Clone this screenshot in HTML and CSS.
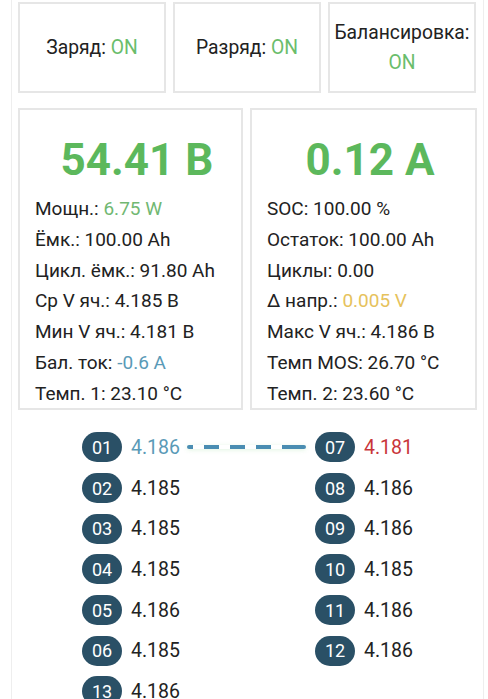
FILE: index.html
```html
<!DOCTYPE html>
<html lang="ru">
<head>
<meta charset="utf-8">
<link rel="stylesheet" href="styles.css">
</head>
<body>
<div class="page">
  <div class="status-row">
    <div class="box status"><div>Заряд: <span class="on">ON</span></div></div>
    <div class="box status"><div>Разряд: <span class="on">ON</span></div></div>
    <div class="box status"><div>Балансировка:<br><span class="on">ON</span></div></div>
  </div>
  <div class="main-row">
    <div class="box panel">
      <div class="big">54.41 B</div>
      <div class="rows">
        <div>Мощн.: <span class="green">6.75 W</span></div>
        <div>Ёмк.: 100.00 Ah</div>
        <div>Цикл. ёмк.: 91.80 Ah</div>
        <div>Ср V яч.: 4.185 B</div>
        <div>Мин V яч.: 4.181 B</div>
        <div>Бал. ток: <span class="blue">-0.6 A</span></div>
        <div>Темп. 1: 23.10 °C</div>
      </div>
    </div>
    <div class="box panel">
      <div class="big">0.12 A</div>
      <div class="rows">
        <div>SOC: 100.00 %</div>
        <div>Остаток: 100.00 Ah</div>
        <div>Циклы: 0.00</div>
        <div>Δ напр.: <span class="yellow">0.005 V</span></div>
        <div>Макс V яч.: 4.186 B</div>
        <div>Темп MOS: 26.70 °C</div>
        <div>Темп. 2: 23.60 °C</div>
      </div>
    </div>
  </div>
  <div class="cells">
    <div class="cell"><span class="badge">01</span><span class="val min">4.186</span><span class="dash"></span></div>
    <div class="cell"><span class="badge">07</span><span class="val max">4.181</span></div>
    <div class="cell"><span class="badge">02</span><span class="val">4.185</span></div>
    <div class="cell"><span class="badge">08</span><span class="val">4.186</span></div>
    <div class="cell"><span class="badge">03</span><span class="val">4.185</span></div>
    <div class="cell"><span class="badge">09</span><span class="val">4.186</span></div>
    <div class="cell"><span class="badge">04</span><span class="val">4.185</span></div>
    <div class="cell"><span class="badge">10</span><span class="val">4.185</span></div>
    <div class="cell"><span class="badge">05</span><span class="val">4.186</span></div>
    <div class="cell"><span class="badge">11</span><span class="val">4.186</span></div>
    <div class="cell"><span class="badge">06</span><span class="val">4.185</span></div>
    <div class="cell"><span class="badge">12</span><span class="val">4.186</span></div>
    <div class="cell"><span class="badge">13</span><span class="val">4.186</span></div>
  </div>
</div>
</body>
</html>
```
FILE: styles.css
```css
html, body {
  margin: 0;
  padding: 0;
  background: #fff;
  overflow: hidden;
}
body {
  font-family: Roboto, "Noto Sans", sans-serif;
  color: #222;
}
.page {
  margin: 0 4px 0 11px;
  min-height: 720px;
  border-left: 1px solid #eeeeee;
  border-right: 1px solid #eeeeee;
  padding: 2px 7px 0 6px;
}
.box {
  border: 2px solid #e6e6e6;
  background: #fff;
  box-sizing: border-box;
}
.status-row {
  display: grid;
  grid-template-columns: 148px 148px 148px;
  column-gap: 7px;
}
.status {
  height: 91px;
  display: flex;
  align-items: center;
  justify-content: center;
  text-align: center;
  font-size: 19.3px;
  line-height: 30px;
}
.on { color: #6abd6b; }
.main-row {
  margin-top: 15px;
  display: grid;
  grid-template-columns: 225px 227px;
  column-gap: 7px;
}
.panel {
  height: 302px;
  padding: 22px 0 0 15px;
}
.big {
  font-size: 44px;
  font-weight: 700;
  color: #5cb85c;
  text-align: center;
  padding-right: 2px;
  line-height: 56px;
}
.rows {
  margin-top: 6px;
  font-size: 19px;
  line-height: 30.8px;
  white-space: nowrap;
}
.green { color: #71b872; }
.blue { color: #5a9ab7; }
.yellow { color: #e6c25c; }
.cells {
  margin-top: 17px;
  display: grid;
  grid-template-columns: 233px 150px;
  grid-auto-rows: 40.7px;
  padding-left: 64px;
}
.cell {
  display: flex;
  align-items: center;
  position: relative;
}
.badge {
  width: 40px;
  height: 30px;
  border-radius: 15px;
  background: #2a5066;
  color: #fff;
  font-size: 18px;
  display: flex;
  align-items: center;
  justify-content: center;
}
.val {
  margin-left: 9px;
  font-size: 19.5px;
}
.val.min { color: #5a9ab7; }
.val.max { color: #c9353a; }
.dash {
  position: absolute;
  left: 105px;
  top: 18px;
  width: 119px;
  height: 4px;
  background: repeating-linear-gradient(90deg, #4a8db2 0 15px, transparent 15px 26px);
  background-position: -9px 0;
  border-radius: 2px;
  box-shadow: 0 1px 4px rgba(150, 220, 150, 0.3);
}
```
